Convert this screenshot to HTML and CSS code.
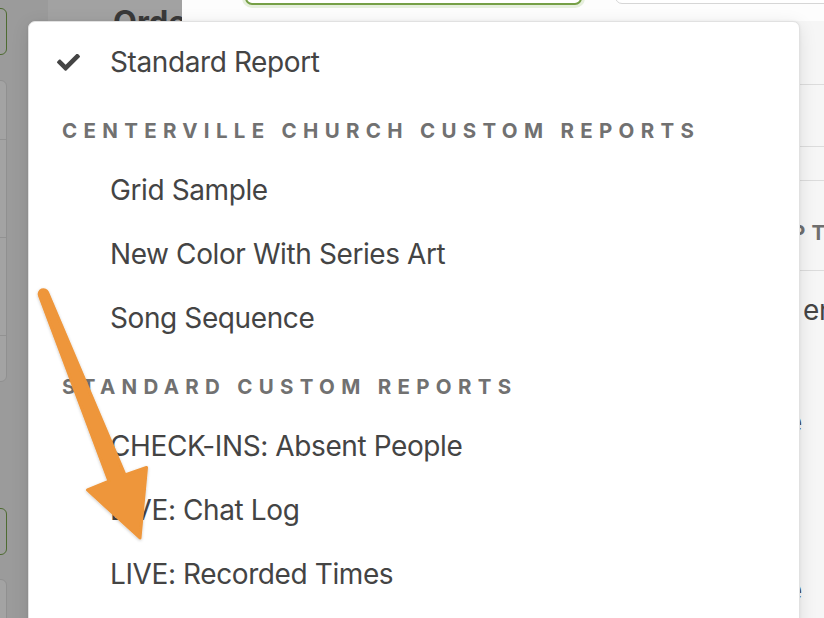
FILE: index.html
```html
<!DOCTYPE html>
<html>
<head>
<meta charset="utf-8">
<link rel="stylesheet" href="styles.css">
</head>
<body>
<div class="app">
  <aside class="sidebar">
    <div class="rail">
      <div class="box green g1"></div>
      <div class="box panel p1">
        <div class="cell c1"></div>
        <div class="cell c2"></div>
        <div class="cell c3"></div>
        <div class="cell c4"></div>
      </div>
      <div class="box green g2"></div>
      <div class="box panel p2"></div>
    </div>
    <div class="sidehead"><h1 class="title">Order</h1></div>
  </aside>
  <main class="main">
    <div class="topbar">
      <div class="field active"></div>
      <div class="field plain"></div>
    </div>
    <div class="content">
      <div class="blank"></div>
      <div class="table">
        <div class="row h64"></div>
        <div class="row h62"></div>
        <div class="row h34"></div>
        <div class="row thead"><span>PTIONS</span></div>
        <div class="tbody">
          <div class="line l1">en</div>
          <div class="line l2">e</div>
          <div class="line l3">e</div>
        </div>
      </div>
    </div>
  </main>
</div>

<div class="menu">
  <div class="item">
    <span class="check">
      <svg viewBox="0 72 512 378" width="23" height="17"><path fill="#444" d="M173.898 439.404l-166.4-166.4c-9.997-9.997-9.997-26.206 0-36.204l36.203-36.204c9.997-9.998 26.207-9.998 36.204 0L192 312.69 432.095 72.596c9.997-9.997 26.207-9.997 36.204 0l36.203 36.204c9.997 9.997 9.997 26.206 0 36.204l-294.4 294.401c-9.998 9.997-26.207 9.997-36.204-.001z"/></svg>
    </span>
    <span class="label">Standard Report</span>
  </div>
  <div class="group">Centerville Church Custom Reports</div>
  <div class="item"><span class="check"></span><span class="label">Grid Sample</span></div>
  <div class="item"><span class="check"></span><span class="label">New Color With Series Art</span></div>
  <div class="item"><span class="check"></span><span class="label">Song Sequence</span></div>
  <div class="group">Standard Custom Reports</div>
  <div class="item"><span class="check"></span><span class="label">CHECK-INS: Absent People</span></div>
  <div class="item"><span class="check"></span><span class="label">LIVE: Chat Log</span></div>
  <div class="item"><span class="check"></span><span class="label">LIVE: Recorded Times</span></div>
</div>

<svg class="arrow" width="824" height="618" viewBox="0 0 824 618">
  <defs>
    <filter id="sh" x="-20%" y="-20%" width="140%" height="140%">
      <feDropShadow dx="0" dy="1" stdDeviation="1.5" flood-color="#000" flood-opacity="0.22"/>
    </filter>
  </defs>
  <path filter="url(#sh)" fill="#EE963A" stroke="#EE963A" stroke-width="3" stroke-linejoin="round"
        d="M39.5,295.6 A4.3,4.3 0 0 1 47.5,292.4 L125,474.8 L146.5,467.5 L140,538 L87.5,490 L109,481.2 Z"/>
</svg>
</body>
</html>
```

FILE: styles.css
```css
html, body {
  margin: 0;
  padding: 0;
}
body {
  width: 824px;
  height: 618px;
  overflow: hidden;
  position: relative;
  font-family: Inter, "Noto Sans", "Liberation Sans", sans-serif;
  background: #fdfdfd;
}
.app {
  display: flex;
  width: 824px;
  height: 618px;
}

/* sidebar (dimmed) */
.sidebar {
  width: 182px;
  flex: none;
  display: flex;
  background: #9b9b9b;
  overflow: hidden;
}
.rail {
  width: 48px;
  flex: none;
  display: flex;
  flex-direction: column;
  padding-top: 8px;
  box-sizing: border-box;
}
.box {
  margin-left: -20px;
  width: 27px;
  box-sizing: border-box;
  border-radius: 6px;
  flex: none;
}
.green {
  height: 47px;
  border: 1.5px solid #4e6b31;
  background: #9d9d9d;
}
.g2 { margin-top: 126px; }
.panel {
  margin-top: 25px;
  border: 1px solid #909090;
  background: #a3a3a3;
  display: flex;
  flex-direction: column;
}
.p1 { height: 302px; }
.p2 { margin-top: 24px; height: 120px; }
.cell { border-bottom: 1px solid #929292; }
.c1 { height: 58px; }
.c2 { height: 97px; }
.c3 { height: 97px; }
.c4 { border-bottom: 0; flex: 1; }

.sidehead {
  flex: 1;
  background: #a2a2a2;
  padding-left: 65px;
  overflow: hidden;
}
.title {
  margin: 0;
  padding-top: 5px;
  font-family: Inter, "Liberation Sans", sans-serif;
  font-size: 31px;
  font-weight: 700;
  line-height: 1.1;
  color: #393939;
  white-space: nowrap;
}

/* main page */
.main {
  flex: 1;
  display: flex;
  flex-direction: column;
  background: #fdfdfd;
  min-width: 0;
}
.topbar {
  height: 21px;
  flex: none;
  display: flex;
  gap: 33px;
  padding-left: 63px;
  overflow: visible;
}
.field {
  margin-top: -30px;
  box-sizing: border-box;
  border-radius: 7px;
  background: #fff;
}
.field.active {
  width: 337px;
  height: 35px;
  border: 2px solid #76a046;
  box-shadow: 0 0 0 3px rgba(130, 180, 80, 0.18);
}
.field.plain {
  flex: 1;
  height: 34px;
  margin-right: -20px;
  border: 1px solid #d6d6d6;
}
.content {
  flex: 1;
  display: flex;
}
.blank { flex: 1; }
.table {
  width: 52px;
  flex: none;
  background: #f6f6f6;
  overflow: hidden;
}
.row {
  border-bottom: 1px solid #dcdcdc;
  box-sizing: border-box;
}
.h64 { height: 64px; }
.h62 { height: 62px; }
.h34 { height: 34px; }
.thead {
  height: 90px;
  padding-left: 20px;
  padding-top: 39px;
  font-size: 20.5px;
  font-weight: 700;
  letter-spacing: 6.3px;
  color: #6f6f6f;
  white-space: nowrap;
}
.tbody {
  display: flex;
  flex-direction: column;
  padding-top: 19px;
  color: #444;
  font-size: 28px;
  letter-spacing: -0.4px;
}
.line {
  height: 40px;
  line-height: 40px;
  white-space: nowrap;
}
.l1 { padding-left: 31px; }
.l2 { padding-left: 14px; margin-top: 72px; }
.l3 { padding-left: 14px; margin-top: 128px; }

/* dropdown menu */
.menu {
  position: absolute;
  left: 28px;
  top: 21px;
  width: 772px;
  height: 640px;
  box-sizing: border-box;
  background: #fff;
  border: 1px solid #e1e1e1;
  border-radius: 7px;
  box-shadow: 0 4px 18px rgba(0, 0, 0, 0.10), 0 0 3px rgba(0, 0, 0, 0.06);
  padding-top: 8px;
}
.item {
  height: 64px;
  display: flex;
  align-items: center;
  padding-left: 28px;
  gap: 29px;
  font-size: 28px;
  letter-spacing: -0.4px;
  color: #444;
  white-space: nowrap;
}
.check {
  width: 24px;
  height: 17px;
  flex: none;
  display: flex;
  align-items: center;
}
.check svg { display: block; }
.group {
  height: 64px;
  box-sizing: border-box;
  padding-top: 8px;
  padding-left: 33px;
  display: flex;
  align-items: center;
  font-size: 20.5px;
  font-weight: 700;
  letter-spacing: 6.3px;
  text-transform: uppercase;
  color: #717171;
  white-space: nowrap;
}

.arrow {
  position: absolute;
  left: 0;
  top: 0;
  pointer-events: none;
}
```
